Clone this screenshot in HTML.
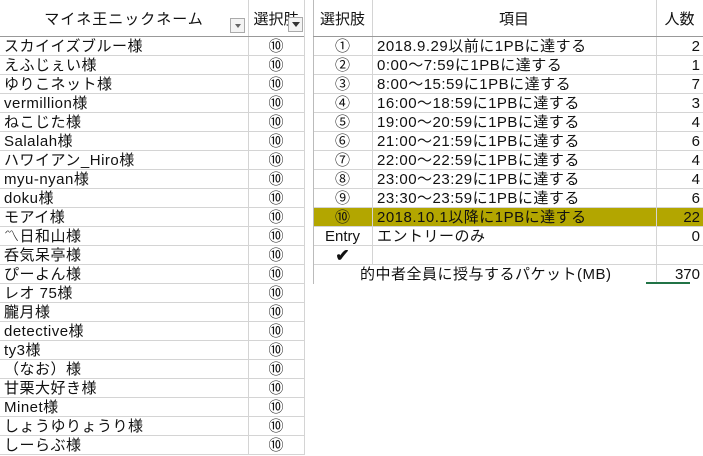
<!DOCTYPE html><html><head><meta charset="utf-8"><style>
body{margin:0;width:703px;height:455px;background:#fff;position:relative;overflow:hidden;font-family:"Liberation Sans","Noto Sans CJK JP",sans-serif;font-size:15px;color:#111}
.c{position:absolute;white-space:nowrap;line-height:20px}
.h{position:absolute;background:#d4d4d4;height:1px}
.v{position:absolute;background:#d4d4d4;width:1px}
.btn{position:absolute;width:15px;height:15px;border:1px solid #aaa;background:#f4f4f4;box-sizing:border-box}
</style></head><body>
<div id="L"></div>
<div style="position:absolute;left:313px;top:207px;width:390px;height:19px;background:#b3a600"></div>
<div id="R"></div>
<div class="v" style="left:248px;top:0;height:455px"></div>
<div class="v" style="left:304px;top:0;height:455px"></div>
<div class="v" style="left:313px;top:0;height:284px;background:#bbb"></div>
<div class="v" style="left:372px;top:0;height:264px"></div>
<div class="v" style="left:656px;top:0;height:284px"></div>
<div class="h" style="left:0;top:36px;width:304px;background:#999"></div>
<div class="h" style="left:313px;top:36px;width:390px;background:#999"></div>
<div style="position:absolute;left:646px;top:282px;width:44px;height:2px;background:#217346"></div>
<div class="c" style="left:0;width:248px;top:10px;text-align:center;letter-spacing:1px">マイネ王ニックネーム</div>
<div class="c" style="left:248px;width:56px;top:10px;text-align:center">選択肢</div>
<div class="btn" style="left:230px;top:18px"><div style="margin:5px 0 0 4px;border:3px solid transparent;border-top:4px solid #666;width:0;height:0"></div></div>
<div class="btn" style="left:288px;top:17px"><div style="margin:4px 0 0 3px;border:4px solid transparent;border-top:5px solid #333;width:0;height:0"></div></div>
<div class="c" style="left:313px;width:59px;top:10px;text-align:center">選択肢</div>
<div class="c" style="left:372px;width:284px;top:10px;text-align:center">項目</div>
<div class="c" style="left:656px;width:47px;top:10px;text-align:center">人数</div>
<script>
var n=["スカイイズブルー様","えふじぇい様","ゆりこネット様","vermillion様","ねこじた様","Salalah様","ハワイアン_Hiro様","myu-nyan様","doku様","モアイ様","〽日和山様","呑気呆亭様","ぴーよん様","レオ 75様","朧月様","detective様","ty3様","（なお）様","甘栗大好き様","Minet様","しょうゆりょうり様","しーらぶ様"];
var h="";
for(var i=0;i<22;i++){var t=36+i*19;
h+='<div class="c" style="left:4px;top:'+(t+1)+'px;letter-spacing:0.5px">'+n[i]+'</div>';
h+='<div class="c" style="left:248px;width:56px;text-align:center;top:'+(t+1)+'px">⑩</div>';
h+='<div class="h" style="left:0;width:304px;top:'+(t+19)+'px"></div>';}
document.getElementById("L").innerHTML=h;
var r=[["①","2018.9.29以前に1PBに達する","2"],["②","0:00～7:59に1PBに達する","1"],["③","8:00～15:59に1PBに達する","7"],["④","16:00～18:59に1PBに達する","3"],["⑤","19:00～20:59に1PBに達する","4"],["⑥","21:00～21:59に1PBに達する","6"],["⑦","22:00～22:59に1PBに達する","4"],["⑧","23:00～23:29に1PBに達する","4"],["⑨","23:30～23:59に1PBに達する","6"],["⑩","2018.10.1以降に1PBに達する","22"],["Entry","エントリーのみ","0"],["<b style='font-size:17px'>✔</b>","",""]];
h="";
for(var i=0;i<12;i++){var t=36+i*19;
h+='<div class="c" style="left:313px;width:59px;text-align:center;top:'+(t+1)+'px">'+r[i][0]+'</div>';
h+='<div class="c" style="left:377px;top:'+(t+1)+'px;letter-spacing:0.5px">'+r[i][1]+'</div>';
h+='<div class="c" style="left:656px;width:44px;text-align:right;top:'+(t+1)+'px">'+r[i][2]+'</div>';
h+='<div class="h" style="left:313px;width:390px;top:'+(t+19)+'px"></div>';}
h+='<div class="c" style="left:360px;top:265px;letter-spacing:0.5px">的中者全員に授与するパケット(MB)</div>';
h+='<div class="c" style="left:656px;width:44px;text-align:right;top:265px">370</div>';
document.getElementById("R").innerHTML=h;
</script>
</body></html>
